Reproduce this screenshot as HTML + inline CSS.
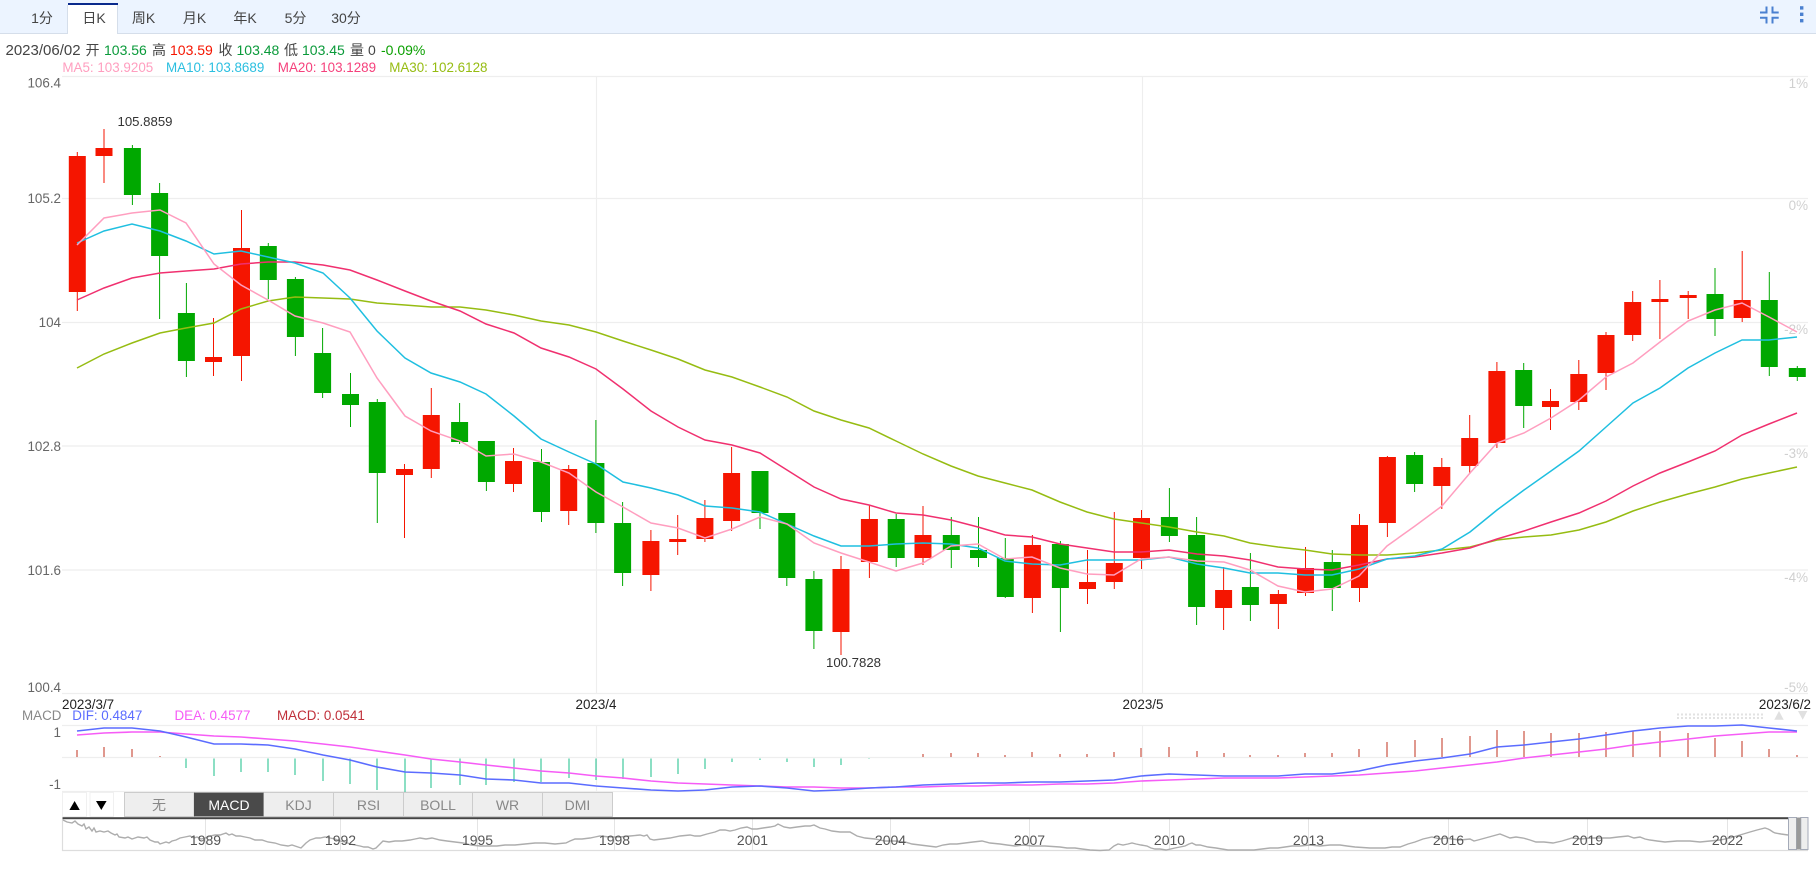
<!DOCTYPE html>
<html lang="zh">
<head>
<meta charset="utf-8">
<title>K线图</title>
<style>
html,body{margin:0;padding:0;background:#fff;width:1816px;height:889px;overflow:hidden}
svg{display:block}
text{font-family:"Liberation Sans","Noto Sans CJK SC",sans-serif;font-size:14px}
.t{text-anchor:middle;fill:#444}
.p{text-anchor:end;fill:#666}
.r{text-anchor:end;fill:#d0d0d0}
.tab{text-anchor:middle;fill:#888}
.y{text-anchor:middle;fill:#555}
</style>
</head>
<body>
<svg width="1816" height="889" viewBox="0 0 1816 889" xmlns="http://www.w3.org/2000/svg">
<rect width="1816" height="889" fill="#fff"/>
<!-- toolbar -->
<rect width="1816" height="33" fill="#ecf4ff"/>
<rect y="33" width="1816" height="1" fill="#d5deea"/>
<rect x="68" y="3" width="50" height="31" fill="#fff"/>
<rect x="68" y="3" width="50" height="2" fill="#0a2a8c"/>
<path d="M67.5 5V34M117.5 5V34" stroke="#d5deea" fill="none"/>
<text class="t" x="42" y="23">1分</text>
<text class="t" x="94" y="23">日K</text>
<text class="t" x="143.5" y="23">周K</text>
<text class="t" x="194.5" y="23">月K</text>
<text class="t" x="245" y="23">年K</text>
<text class="t" x="295.5" y="23">5分</text>
<text class="t" x="346" y="23">30分</text>
<path d="M1760 12.5H1766.5V6.5M1778.7 12.5H1772.5V6.5M1760 17.7H1766.5V23.5M1778.7 17.7H1772.5V23.5" stroke="#4a80d0" stroke-width="2" fill="none"/>
<rect x="1800" y="6.2" width="3.4" height="3.4" fill="#4a80d0"/>
<rect x="1800" y="12.6" width="3.4" height="3.4" fill="#4a80d0"/>
<rect x="1800" y="19" width="3.4" height="3.4" fill="#4a80d0"/>
<!-- info -->
<text x="5.5" y="55" fill="#444" style="font-size:15px">2023/06/02</text>
<text x="85.5" y="55" fill="#444">开</text>
<text x="104" y="55" fill="#0a9a3a">103.56</text>
<text x="152" y="55" fill="#444">高</text>
<text x="170" y="55" fill="#f51500">103.59</text>
<text x="218.5" y="55" fill="#444">收</text>
<text x="236.5" y="55" fill="#0a9a3a">103.48</text>
<text x="284" y="55" fill="#444">低</text>
<text x="302" y="55" fill="#0a9a3a">103.45</text>
<text x="350" y="55" fill="#444">量</text>
<text x="368" y="55" fill="#444">0</text>
<text x="381" y="55" fill="#0aa000">-0.09%</text>
<g style="font-size:13.4px">
<text x="62.4" y="72" fill="#ff9ebf" style="font-size:13.4px">MA5: 103.9205</text>
<text x="166" y="72" fill="#2bbfe0" style="font-size:13.4px">MA10: 103.8689</text>
<text x="277.8" y="72" fill="#f5417c" style="font-size:13.4px">MA20: 103.1289</text>
<text x="389.2" y="72" fill="#96bc12" style="font-size:13.4px">MA30: 102.6128</text>
</g>
<!-- grid -->
<path d="M62 76.5H1808M62 198.5H1808M62 322.5H1808M62 446H1808M62 570H1808M62 693.5H1808M62 725.5H1808M62 757.5H1808M62 791.5H1808" stroke="#eeeeee" stroke-width="1.2" fill="none"/>
<path d="M596.5 76V693M1142.5 76V693M596.5 726V791M1142.5 726V791" stroke="#eeeeee" stroke-width="1.2" fill="none"/>
<!-- price labels -->
<text class="p" x="61" y="87.5" style="font-size:13.4px">106.4</text>
<text class="p" x="61" y="203" style="font-size:13.4px">105.2</text>
<text class="p" x="61" y="327" style="font-size:13.4px">104</text>
<text class="p" x="61" y="451" style="font-size:13.4px">102.8</text>
<text class="p" x="61" y="575" style="font-size:13.4px">101.6</text>
<text class="p" x="61" y="692" style="font-size:13.4px">100.4</text>
<text class="r" x="1808" y="88" style="font-size:13.4px">1%</text>
<text class="r" x="1808" y="210" style="font-size:13.4px">0%</text>
<text class="r" x="1808" y="334" style="font-size:13.4px">-2%</text>
<text class="r" x="1808" y="458" style="font-size:13.4px">-3%</text>
<text class="r" x="1808" y="582" style="font-size:13.4px">-4%</text>
<text class="r" x="1808" y="692" style="font-size:13.4px">-5%</text>
<!-- candle wicks -->
<path stroke="#f51500" stroke-width="1" fill="none" d="M77.3 152V311M104 129V183M213.5 318V376M241.5 210V381M404.5 464V538M431.3 388V478M513.5 448V492M568.7 465V525M650.9 530V591M677.7 515V555M704.9 500V542M731.6 447V531M841 556V655M869.4 505V578M923 506V565M1032.4 535V613M1087.5 550V604M1114.3 512V589M1141.5 510V569M1223.6 567V630M1278.4 590V629M1305.5 547V596M1359.5 514V602M1387.4 456V537M1441.8 458V509M1469.7 415V474M1496.9 362V448M1550.5 389V430M1578.8 360V410M1606 332V390M1632.7 291V341M1659.9 280V339M1688.2 291V319M1742.2 251V322"/>
<path stroke="#00a800" stroke-width="1" fill="none" d="M132.4 145V205M159.6 183V319M186.4 283V377M268.3 243V299M295.4 277V356M322.6 328V398M350.5 373V427M377.3 399V523M459.6 403V444M486.4 441V491M541.5 449V522M595.9 420V533M622.6 502V586M760 471V529M786.8 513V586M813.9 571V649M896.2 514V567M951.3 517V568M978.5 517V567M1005.3 538V598M1060.4 541V632M1169.4 488V542M1196.6 517V625M1250.4 553V621M1332.3 550V611M1414.6 452V492M1523.7 363V428M1715 268V336M1769.3 272V376M1797.3 366V381"/>
<!-- candle bodies -->
<path fill="#f51500" d="M68.8 156h17V292h-17zM95.5 148h17V156h-17zM205 357h17V362h-17zM233 248h17V356h-17zM396 469h17V475h-17zM422.8 415h17V469h-17zM505 461h17V484h-17zM560.2 469h17V511h-17zM642.4 541h17V575h-17zM669.2 539h17V542h-17zM696.4 518h17V539h-17zM723.1 473h17V521h-17zM832.5 569h17V632h-17zM860.9 519h17V562h-17zM914.5 535h17V558h-17zM1023.9 545h17V598h-17zM1079 582h17V589h-17zM1105.8 563h17V582h-17zM1133 518h17V558h-17zM1215.1 590h17V608h-17zM1269.9 594h17V604h-17zM1297 568h17V593h-17zM1351 525h17V588h-17zM1378.9 457h17V523h-17zM1433.3 467h17V486h-17zM1461.2 438h17V466h-17zM1488.4 371h17V443h-17zM1542 401h17V407h-17zM1570.3 374h17V402h-17zM1597.5 335h17V373h-17zM1624.2 302h17V335h-17zM1651.4 299h17V302h-17zM1679.7 295h17V298h-17zM1733.7 300h17V318h-17z"/>
<path fill="#00a800" d="M123.9 148h17V195h-17zM151.1 193h17V256h-17zM177.9 313h17V361h-17zM259.8 246h17V280h-17zM286.9 279h17V337h-17zM314.1 353h17V393h-17zM342 394h17V405h-17zM368.8 402h17V473h-17zM451.1 422h17V442h-17zM477.9 441h17V482h-17zM533 462h17V512h-17zM587.4 463h17V523h-17zM614.1 523h17V573h-17zM751.5 471h17V513h-17zM778.3 513h17V578h-17zM805.4 579h17V631h-17zM887.7 519h17V558h-17zM942.8 535h17V550h-17zM970 550h17V558h-17zM996.8 558h17V597h-17zM1051.9 544h17V588h-17zM1160.9 517h17V536h-17zM1188.1 535h17V607h-17zM1241.9 587h17V605h-17zM1323.8 562h17V588h-17zM1406.1 455h17V484h-17zM1515.2 370h17V406h-17zM1706.5 294h17V319h-17zM1760.8 300h17V367h-17zM1788.8 368h17V377h-17z"/>
<!-- moving averages -->
<polyline fill="none" stroke="#96bc12" stroke-width="1.5" points="77,368 104,354 132,343 160,333 186,328 214,323 241,309 268,301 295,297 323,298 350,299 377,303 405,305 431,307 460,307 486,310 514,315 541,321 569,325 596,332 623,341 651,350 678,359 705,370 732,377 760,387 787,397 814,411 841,420 869,428 896,441 923,454 951,466 978,476 1005,483 1032,490 1060,502 1087,512 1114,519 1141,523 1169,527 1197,532 1224,536 1250,543 1278,547 1305,550 1332,554 1359,555 1387,555 1415,553 1442,550 1470,547 1497,540 1524,537 1551,535 1579,530 1606,522 1633,511 1660,502 1688,494 1715,487 1742,479 1769,473 1797,467"/>
<polyline fill="none" stroke="#f0306f" stroke-width="1.5" points="77,300 104,288 132,278 160,273 186,271 214,269 241,264 268,262 295,262 323,265 350,270 377,280 405,291 431,301 460,311 486,324 514,333 541,348 569,357 596,369 623,389 651,411 678,427 705,440 732,445 760,453 787,470 814,487 841,499 869,505 896,513 923,515 951,520 978,527 1005,535 1032,537 1060,544 1087,548 1114,552 1141,552 1169,550 1197,554 1224,556 1250,560 1278,567 1305,569 1332,570 1359,565 1387,559 1415,557 1442,553 1470,548 1497,539 1524,531 1551,522 1579,513 1606,501 1633,486 1660,473 1688,462 1715,451 1742,435 1769,424 1797,413"/>
<polyline fill="none" stroke="#1fbfe0" stroke-width="1.5" points="77,243 104,231 132,224 160,231 186,241 214,254 241,251 268,257 295,263 323,273 350,298 377,331 405,358 431,373 460,382 486,394 514,416 541,439 569,452 596,464 623,482 651,488 678,495 705,506 732,508 760,512 787,524 814,536 841,546 869,546 896,544 923,543 951,544 978,548 1005,561 1032,564 1060,565 1087,560 1114,560 1141,560 1169,557 1197,564 1224,568 1250,573 1278,573 1305,575 1332,575 1359,569 1387,559 1415,556 1442,549 1470,532 1497,510 1524,490 1551,471 1579,451 1606,427 1633,403 1660,388 1688,368 1715,353 1742,340 1769,340 1797,337"/>
<polyline fill="none" stroke="#ff9ebf" stroke-width="1.5" points="77,245 104,218 132,213 160,210 186,223 214,264 241,285 268,300 295,316 323,323 350,332 377,378 405,416 431,431 460,441 486,456 514,454 541,462 569,473 596,492 623,507 651,523 678,528 705,538 732,529 760,517 787,524 814,543 841,553 869,562 896,571 923,563 951,546 978,544 1005,559 1032,557 1060,568 1087,574 1114,575 1141,559 1169,557 1197,561 1224,562 1250,570 1278,586 1305,592 1332,589 1359,576 1387,546 1415,526 1442,506 1470,473 1497,443 1524,433 1551,418 1579,400 1606,377 1633,363 1660,342 1688,321 1715,310 1742,303 1769,317 1797,332"/>
<!-- annotations -->
<text x="117.5" y="126" fill="#333" style="font-size:13.2px">105.8859</text>
<text x="826" y="667" fill="#333" style="font-size:13.2px">100.7828</text>
<!-- x labels -->
<text x="62" y="709" fill="#222" style="font-size:13.4px">2023/3/7</text>
<text x="596" y="709" fill="#222" text-anchor="middle" style="font-size:13.4px">2023/4</text>
<text x="1143" y="709" fill="#222" text-anchor="middle" style="font-size:13.4px">2023/5</text>
<text x="1811" y="709" fill="#222" text-anchor="end" style="font-size:13.4px">2023/6/2</text>
<!-- MACD legend -->
<text x="22" y="720" fill="#888" style="font-size:13.4px">MACD</text>
<text x="72.3" y="720" fill="#5b6cff" style="font-size:13.4px">DIF: 0.4847</text>
<text x="174.5" y="720" fill="#f65cf6" style="font-size:13.4px">DEA: 0.4577</text>
<text x="277" y="720" fill="#c0303a" style="font-size:13.4px">MACD: 0.0541</text>
<text class="p" x="61" y="737" style="font-size:13.4px">1</text>
<text class="p" x="61" y="789" style="font-size:13.4px">-1</text>
<path d="M1677 714.5H1764M1677 718H1764" stroke="#e2e2e2" stroke-width="2" stroke-dasharray="2 2" fill="none"/>
<path d="M1774.3 719.7L1779 711L1783.7 719.7ZM1798 711L1802.7 719.7L1807.3 711Z" fill="#e0e0e0"/>
<!-- MACD histogram -->
<path stroke="#c0301e" stroke-width="1" fill="none" d="M77 757V750M104 757V747M132 757V749M160 757V756M923 757V754M951 757V753M978 757V753M1005 757V755M1032 757V752M1060 757V754M1087 757V754M1114 757V752M1141 757V748M1169 757V747M1197 757V751M1224 757V753M1250 757V755M1278 757V755M1305 757V753M1332 757V753M1359 757V749M1387 757V742M1415 757V740M1442 757V738M1470 757V736M1497 757V730M1524 757V731M1551 757V733M1579 757V733M1606 757V732M1633 757V731M1660 757V731M1688 757V733M1715 757V738M1742 757V741M1769 757V749M1797 757V755"/>
<path stroke="#1abf8a" stroke-width="1" fill="none" d="M186 758.5V768M214 758.5V776M241 758.5V772M268 758.5V772M295 758.5V775M323 758.5V781M350 758.5V784M377 758.5V790M405 758.5V792M431 758.5V788M460 758.5V785M486 758.5V785M514 758.5V782M541 758.5V782M569 758.5V778M596 758.5V780M623 758.5V779M651 758.5V777M678 758.5V774M705 758.5V769M732 758.5V762M760 758.5V760M787 758.5V762M814 758.5V767M841 758.5V765M869 758.5V759"/>
<polyline fill="none" stroke="#f65cf6" stroke-width="1.6" points="77,735 104,733 132,732 160,732 186,734 214,736 241,737 268,739 295,741 323,744 350,747 377,751 405,755 431,759 460,762 486,765 514,768 541,771 569,773 596,776 623,778 651,781 678,783 705,784 732,785 760,786 787,787 814,787 841,788 869,788 896,787 923,787 951,786 978,786 1005,785 1032,785 1060,784 1087,784 1114,783 1141,781 1169,780 1197,779 1224,778 1250,778 1278,778 1305,777 1332,776 1359,775 1387,773 1415,771 1442,768 1470,765 1497,762 1524,758 1551,755 1579,752 1606,749 1633,745 1660,742 1688,739 1715,736 1742,734 1769,732 1797,732"/>
<polyline fill="none" stroke="#5b6cff" stroke-width="1.6" points="77,731 104,728 132,728 160,731 186,737 214,744 241,744 268,745 295,749 323,755 350,760 377,767 405,772 431,773 460,775 486,779 514,780 541,783 569,783 596,786 623,788 651,790 678,791 705,790 732,787 760,786 787,788 814,791 841,790 869,788 896,787 923,785 951,784 978,783 1005,783 1032,782 1060,782 1087,781 1114,780 1141,776 1169,774 1197,775 1224,776 1250,776 1278,776 1305,774 1332,774 1359,771 1387,765 1415,761 1442,758 1470,754 1497,747 1524,745 1551,742 1579,739 1606,735 1633,731 1660,728 1688,726 1715,726 1742,725 1769,728 1797,731"/>
<!-- indicator tabs -->
<rect x="62.5" y="792.5" width="24" height="24" fill="#fff" stroke="#f0f0f0"/>
<rect x="90" y="792.5" width="23.5" height="24" fill="#fff" stroke="#f0f0f0"/>
<path d="M74.6 801L79.8 810H69.4ZM96 801H106.6L101.3 810Z" fill="#000"/>
<g stroke="#cccccc" stroke-width="1">
<rect x="124.5" y="792.5" width="69.5" height="24" fill="#eeeeee"/>
<rect x="263.5" y="792.5" width="70" height="24" fill="#eeeeee"/>
<rect x="333.5" y="792.5" width="70" height="24" fill="#eeeeee"/>
<rect x="403.5" y="792.5" width="69" height="24" fill="#eeeeee"/>
<rect x="472.5" y="792.5" width="70" height="24" fill="#eeeeee"/>
<rect x="542.5" y="792.5" width="70" height="24" fill="#eeeeee"/>
</g>
<rect x="194" y="792.5" width="69.5" height="24" fill="#4a4a4a"/>
<text class="tab" x="159" y="810">无</text>
<text x="229" y="810" fill="#fff" text-anchor="middle">MACD</text>
<text class="tab" x="298.5" y="810">KDJ</text>
<text class="tab" x="368.5" y="810">RSI</text>
<text class="tab" x="438" y="810">BOLL</text>
<text class="tab" x="507.5" y="810">WR</text>
<text class="tab" x="577.5" y="810">DMI</text>
<!-- navigator -->
<path d="M205.5 819V850M340.5 819V850M477.5 819V850M614.5 819V850M752.5 819V850M890.5 819V850M1029.5 819V850M1169.5 819V850M1308.5 819V850M1448.5 819V850M1587.5 819V850M1727.5 819V850" stroke="#e4e4e4" fill="none"/>
<path d="M62.5 819V850.5H1808" stroke="#dddddd" fill="none" stroke-width="1.2"/>
<rect x="62.5" y="817.2" width="1726" height="2" fill="#444"/>
<polyline fill="none" stroke="#adadad" stroke-width="1.4" points="63,820 67,822 72,823 75,821 78,824 82,826 84,824 86,829 89,827 92,831 94,828 96,832 100,831 104,832 108,831 111,833 115,835 117,834 119,837 125,838 128,837 132,839 135,838 138,837 144,838 147,837 150,840 155,842 158,842 160,844 166,842 169,843 172,841 176,840 180,838 185,837 190,836 194,838 197,837 201,839 205,838 210,836 215,835 220,835 226,833 229,835 232,834 236,836 240,836 245,837 250,838 255,840 262,840 268,842 275,843 281,845 288,846 292,845 298,847 301,848 303,846 306,843 310,840 313,839 316,838 320,838 325,837 330,838 335,839 340,841 345,842 350,844 355,845 360,846 364,847 368,847 373,849 376,848 378,846 381,843 383,841 389,842 395,841 402,841 410,840 415,839 420,838 426,839 432,838 440,840 447,841 455,842 463,843 471,845 480,846 485,846 490,846 497,846 505,845 515,845 525,844 535,843 545,843 555,844 566,843 570,841 575,839 582,839 590,838 595,837 600,836 610,837 620,837 630,836 640,835 644,836 647,835 650,839 654,840 662,839 670,838 680,836 690,835 695,836 700,836 707,834 715,832 720,830 725,830 730,831 735,830 741,828 747,827 752,829 757,829 763,828 770,827 775,826 778,824 784,827 790,828 797,827 805,826 810,826 814,825 820,828 825,829 832,831 840,832 845,832 850,832 857,836 865,838 875,839 885,841 895,841 905,842 912,844 920,845 928,846 936,847 943,845 950,844 957,844 965,843 973,842 982,841 990,843 1000,844 1007,845 1015,846 1023,845 1032,846 1045,846 1060,847 1067,848 1075,848 1082,849 1090,850 1100,850.5 1109,850 1114,846 1118,844 1123,845 1128,844 1132,843 1136,844 1141,845 1147,846 1151,848 1155,849 1160,849 1166,850 1175,848 1185,846 1189,844 1192,843 1196,845 1200,845 1208,847 1216,848 1222,849 1228,850 1240,850 1254,850 1262,849 1270,848 1278,848 1285,847 1292,846 1300,846 1310,845 1320,846 1330,845 1340,845 1347,846 1355,847 1370,848 1385,848 1392,847 1400,847 1408,844 1415,842 1423,839 1432,837 1436,838 1440,839 1446,838 1452,839 1460,840 1470,839 1474,841 1478,840 1489,837 1500,834 1505,836 1510,838 1516,837 1523,838 1530,840 1536,842 1544,842 1553,843 1562,841 1572,838 1581,839 1590,838 1600,838 1610,838 1618,837 1628,836 1634,838 1640,837 1645,839 1650,840 1657,841 1665,842 1677,841 1690,841 1700,842 1710,841 1720,840 1730,838 1740,835 1750,832 1757,830 1765,828 1768,829 1770,830 1773,832 1775,833 1781,834 1788,835"/>
<text class="y" x="205.5" y="845" >1989</text>
<text class="y" x="340.5" y="845">1992</text>
<text class="y" x="477.5" y="845">1995</text>
<text class="y" x="614.5" y="845">1998</text>
<text class="y" x="752.5" y="845">2001</text>
<text class="y" x="890.5" y="845">2004</text>
<text class="y" x="1029.5" y="845">2007</text>
<text class="y" x="1169.5" y="845">2010</text>
<text class="y" x="1308.5" y="845">2013</text>
<text class="y" x="1448.5" y="845">2016</text>
<text class="y" x="1587.5" y="845">2019</text>
<text class="y" x="1727.5" y="845">2022</text>
<!-- handle -->
<rect x="1788.5" y="817.5" width="8" height="32" fill="#eeeeee" stroke="#a4aab8"/>
<rect x="1800.8" y="817.5" width="7.2" height="32" fill="#eeeeee" stroke="#a4aab8"/>
<rect x="1796.5" y="817.5" width="4.3" height="32" fill="#999999"/>
</svg>
</body>
</html>
